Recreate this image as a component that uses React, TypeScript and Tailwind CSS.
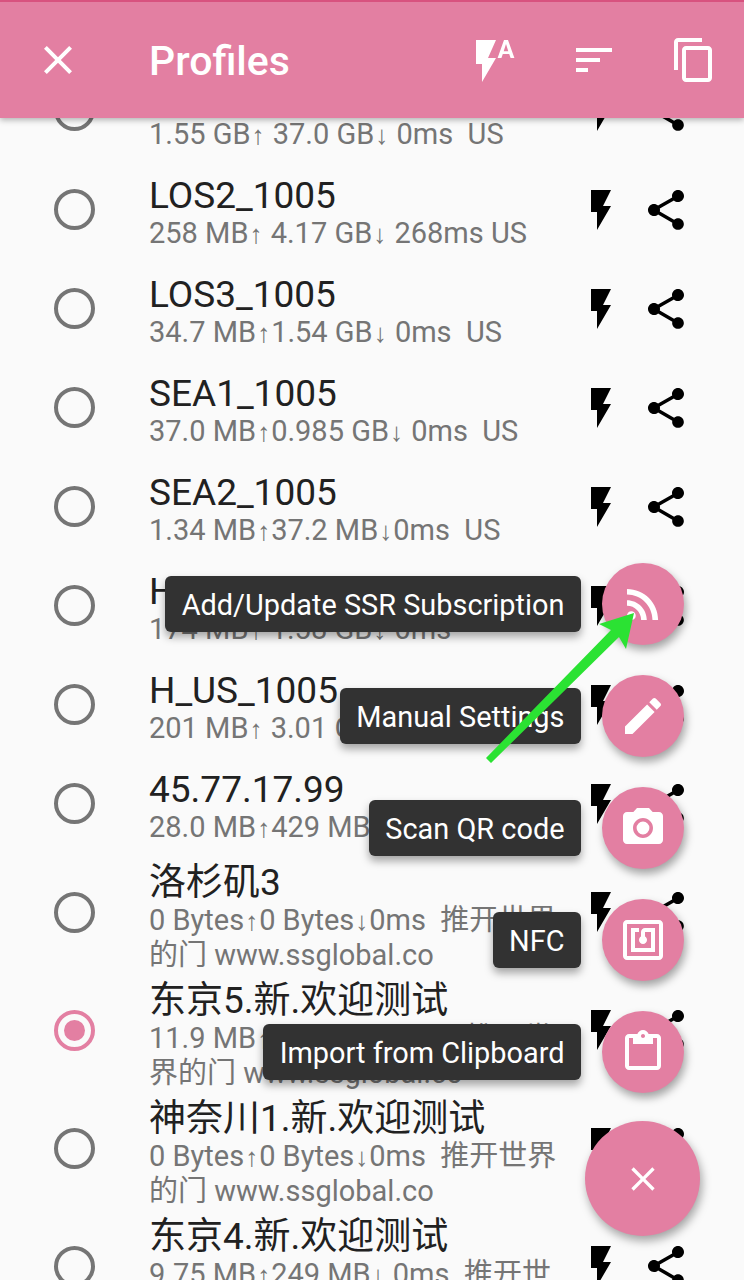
import React from "react";

const font = { fontFamily: 'Roboto, "Noto Sans CJK SC", sans-serif' };

const Icon: React.FC<{ d: string; className?: string; box?: string }> = ({ d, className, box }) => (
  <svg viewBox={box ?? "0 0 24 24"} className={className ?? "w-12 h-12 shrink-0"} fill="currentColor">
    <path d={d} />
  </svg>
);

const CLOSE = "M19 6.41L17.59 5 12 10.59 6.41 5 5 6.41 10.59 12 5 17.59 6.41 19 12 13.41 17.59 19 19 17.59 13.41 12z";
const FLASH = "M7 2v11h3v9l7-12h-4l4-8z";
const FLASH_AUTO = "M3 2v12h3v9l7-12H9l4-9H3zm16 0h-2l-3.2 9h1.9l.7-2h3.2l.7 2h1.9L19 2zm-2.15 5.65L18 4l1.15 3.65h-2.3z";
const SORT = "M3 18h6v-2H3v2zM3 6v2h18V6H3zm0 7h12v-2H3v2z";
const COPY = "M16 1H4c-1.1 0-2 .9-2 2v14h2V3h12V1zm3 4H8c-1.1 0-2 .9-2 2v14c0 1.1.9 2 2 2h11c1.1 0 2-.9 2-2V7c0-1.1-.9-2-2-2zm0 16H8V7h11v14z";
const SHARE = "M18 16.08c-.76 0-1.44.3-1.96.77L8.91 12.7c.05-.23.09-.46.09-.7s-.04-.47-.09-.7l7.05-4.11c.54.5 1.25.81 2.04.81 1.66 0 3-1.34 3-3s-1.34-3-3-3-3 1.34-3 3c0 .24.04.47.09.7L8.04 9.81C7.5 9.31 6.79 9 6 9c-1.66 0-3 1.34-3 3s1.34 3 3 3c.79 0 1.5-.31 2.04-.81l7.12 4.16c-.05.21-.08.43-.08.65 0 1.61 1.31 2.92 2.92 2.92 1.61 0 2.92-1.31 2.92-2.92s-1.31-2.92-2.92-2.92z";
const RSS = "M6.18 15.64a2.18 2.18 0 1 0 0 4.36 2.18 2.18 0 0 0 0-4.36zM4 4.44v2.83c7.03 0 12.73 5.7 12.73 12.73h2.83c0-8.59-6.97-15.56-15.56-15.56zm0 5.66v2.83c3.9 0 7.07 3.17 7.07 7.07h2.83c0-5.47-4.43-9.9-9.9-9.9z";
const EDIT = "M3 17.25V21h3.75L17.81 9.94l-3.75-3.75L3 17.25zM20.71 7.04c.39-.39.39-1.02 0-1.41l-2.34-2.34c-.39-.39-1.02-.39-1.41 0l-1.83 1.83 3.75 3.75 1.83-1.83z";
const CAMERA = "M12 8.8a3.2 3.2 0 1 0 0 6.4 3.2 3.2 0 0 0 0-6.4zM9 2L7.17 4H4c-1.1 0-2 .9-2 2v12c0 1.1.9 2 2 2h16c1.1 0 2-.9 2-2V6c0-1.1-.9-2-2-2h-3.17L15 2H9zm3 15c-2.76 0-5-2.24-5-5s2.24-5 5-5 5 2.24 5 5-2.24 5-5 5z";
const NFC = "M20 2H4c-1.1 0-2 .9-2 2v16c0 1.1.9 2 2 2h16c1.1 0 2-.9 2-2V4c0-1.1-.9-2-2-2zm0 18H4V4h16v16zM18 6h-5c-1.1 0-2 .9-2 2v2.28c-.6.35-1 .98-1 1.72 0 1.1.9 2 2 2s2-.9 2-2c0-.74-.4-1.38-1-1.72V8h3v8H8V8h2V6H6v12h12V6z";
const CLIPBOARD = "M19 3h-4.18C14.4 1.84 13.3 1 12 1c-1.3 0-2.4.84-2.82 2H5c-1.1 0-2 .9-2 2v14c0 1.1.9 2 2 2h14c1.1 0 2-.9 2-2V5c0-1.1-.9-2-2-2zm-7 0c.55 0 1 .45 1 1s-.45 1-1 1-1-.45-1-1 .45-1 1-1zm7 16H5V5h2v3h10V5h2v14z";

const profiles = [
  { name: "LOS1_1005", info: "1.55 GB↑ 37.0 GB↓ 0ms  US" },
  { name: "LOS2_1005", info: "258 MB↑ 4.17 GB↓ 268ms US" },
  { name: "LOS3_1005", info: "34.7 MB↑1.54 GB↓ 0ms  US" },
  { name: "SEA1_1005", info: "37.0 MB↑0.985 GB↓ 0ms  US" },
  { name: "SEA2_1005", info: "1.34 MB↑37.2 MB↓0ms  US" },
  { name: "H_JP_1005", info: "174 MB↑ 1.58 GB↓ 0ms" },
  { name: "H_US_1005", info: "201 MB↑ 3.01 GB↓ 0ms  US" },
  { name: "45.77.17.99", info: "28.0 MB↑429 MB↓ 0ms  US" },
  { name: "洛杉矶3", info: "0 Bytes↑0 Bytes↓0ms  推开世界的门 www.ssglobal.co", tall: true },
  { name: "东京5.新.欢迎测试", info: "11.9 MB↑1.02 GB↓ 0ms  推开世界的门 www.ssglobal.co", tall: true, active: true },
  { name: "神奈川1.新.欢迎测试", info: "0 Bytes↑0 Bytes↓0ms  推开世界的门 www.ssglobal.co", tall: true },
  { name: "东京4.新.欢迎测试", info: "9.75 MB↑249 MB↓ 0ms  推开世界的门 www.ssglobal.co", tall: true },
];

const actions = [
  { label: "Add/Update SSR Subscription", icon: RSS },
  { label: "Manual Settings", icon: EDIT },
  { label: "Scan QR code", icon: CAMERA },
  { label: "NFC", icon: NFC },
  { label: "Import from Clipboard", icon: CLIPBOARD },
];

// the arrows are much narrower on the device than in the installed fonts
const Info: React.FC<{ text: string }> = ({ text }) => (
  <>
    {text.split(/([↑↓])/).map((part, i) =>
      part === "↑" || part === "↓" ? (
        <span key={i} className="px-[1px] text-[26px] font-['Liberation_Sans']">
          {part}
        </span>
      ) : (
        part
      )
    )}
  </>
);

export default function App() {
  return (
    <div className="relative w-[744px] h-[1280px] overflow-hidden bg-[#fafafa] flex flex-col" style={font}>
      <header className="relative z-10 h-[118px] shrink-0 bg-[#e37fa2] border-t-2 border-[#d8527f] text-white shadow-[0_2px_6px_rgba(0,0,0,0.3)] flex items-center pl-[34px] pr-[26px]">
        <Icon d={CLOSE} />
        <h1 className="ml-[67px] pt-[3px] text-[41px] font-medium leading-none">Profiles</h1>
        <div className="ml-auto flex items-center gap-[52px]">
          <Icon d={FLASH_AUTO} />
          <Icon d={SORT} />
          <Icon d={COPY} />
        </div>
      </header>

      <ul className="-mt-[57px] flex flex-col">
        {profiles.map((p) => (
          <li
            key={p.name}
            className={`flex items-center shrink-0 pl-[54px] pr-[54px] ${p.tall ? "h-[118px]" : "h-[99px]"}`}
          >
            <span
              className={`w-[41px] h-[41px] rounded-full border-4 flex items-center justify-center shrink-0 ${
                p.active ? "border-[#e37fa2]" : "border-[#757575]"
              }`}
            >
              {p.active && <span className="w-[21px] h-[21px] rounded-full bg-[#e37fa2]" />}
            </span>
            <div className={`ml-[54px] w-[410px] shrink-0 ${p.tall ? "pt-[9px]" : "pt-[6px]"}`}>
              <div className="text-[37px] leading-[41px] text-[#212121] whitespace-nowrap">{p.name}</div>
              <div className="text-[29px] leading-[34px] text-[#757575] whitespace-pre-wrap">
                <Info text={p.info} />
              </div>
            </div>
            <div className="ml-auto flex items-center text-black gap-[17px]">
              <Icon d={FLASH} />
              <Icon d={SHARE} />
            </div>
          </li>
        ))}
      </ul>

      <div className="absolute right-[44px] bottom-[44px] flex flex-col items-end">
        {actions.map((a) => (
          <div key={a.label} className="flex items-center gap-[21px] h-[82px] mb-[30px] mr-[16px]">
            <span className="h-[56px] px-[16.5px] rounded-[6px] bg-[#323232] text-white text-[28.9px] leading-[58px] whitespace-nowrap shadow-[0_5px_8px_rgba(0,0,0,0.35)]">
              {a.label}
            </span>
            <span className="w-[82px] h-[82px] rounded-full bg-[#e37fa2] text-white flex items-center justify-center shadow-[2px_5px_8px_rgba(0,0,0,0.35)]">
              <Icon d={a.icon} />
            </span>
          </div>
        ))}
        <span className="-mt-[2px] w-[115px] h-[115px] rounded-full bg-[#e37fa2] text-white flex items-center justify-center shadow-[2px_5px_10px_rgba(0,0,0,0.35)]">
          <Icon d={CLOSE} className="w-10 h-10" />
        </span>
      </div>

      {/* green annotation arrow drawn over the screenshot */}
      <svg className="absolute inset-0 pointer-events-none" width="744" height="1280" viewBox="0 0 744 1280">
        <polygon points="486,758 491,763 619,637 626,649 634,613 599,624 611,630" fill="#2be233" />
      </svg>
    </div>
  );
}
